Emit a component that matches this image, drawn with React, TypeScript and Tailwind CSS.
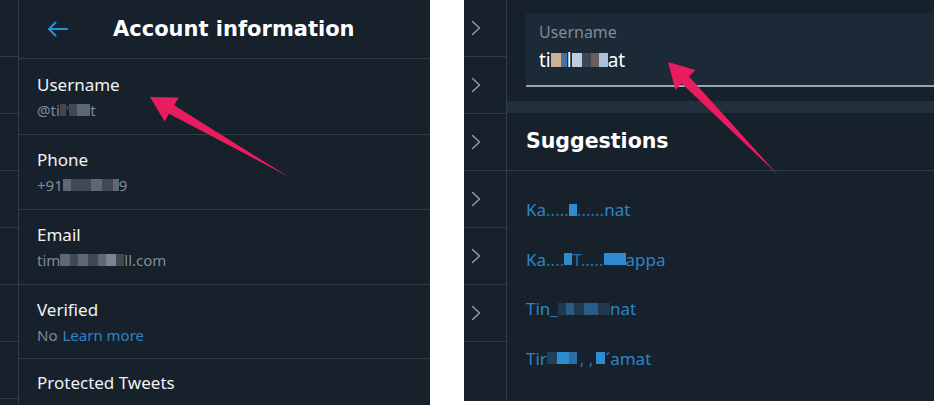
import React from "react";

const F = { fontFamily: '"Noto Sans", "Open Sans", sans-serif' };
const H = { fontFamily: '"DejaVu Sans", "Noto Sans", sans-serif' };

function Blk({ w, c, h = 12 }: { w: number; c: string; h?: number }) {
  return <span className="inline-block align-middle" style={{ width: w, height: h, background: c }} />;
}

function Chevron() {
  return (
    <svg width="10" height="16" viewBox="0 0 10 16" fill="none">
      <path d="M1.5 1.5 L8.5 8 L1.5 14.5" stroke="#8b98a5" strokeWidth="1.6" strokeLinecap="round" strokeLinejoin="round" />
    </svg>
  );
}

function Row({ label, children, h }: { label: string; children?: React.ReactNode; h: string }) {
  return (
    <div className={`${h} shrink-0 border-b border-[#2f3b47] pl-[18px] flex flex-col justify-center`}>
      <div className="text-[17px] leading-[22px] text-[#f0f2f4]">{label}</div>
      {children && <div className="text-[15px] leading-[20px] text-[#7f8c98] mt-[4px] flex items-center">{children}</div>}
    </div>
  );
}

export default function App() {
  const g1 = "#5d6874";
  const g2 = "#3e4954";
  const g3 = "#7b8592";
  return (
    <div className="w-[940px] h-[405px] bg-white flex relative overflow-hidden" style={F}>
      {/* Left screenshot */}
      <div className="w-[430px] h-[405px] shrink-0 flex bg-[#17212c] overflow-hidden">
        <div className="w-[19px] shrink-0 border-r border-[#2f3b47] flex flex-col">
          {[0, 1, 2, 3, 4, 5, 6].map((i) => (
            <div key={i} className="h-[57px] shrink-0 border-b border-[#2f3b47]" />
          ))}
        </div>
        <div className="flex-1 flex flex-col">
          <div className="h-[59px] shrink-0 border-b border-[#2f3b47] flex items-center">
            <svg className="ml-[28px]" width="21" height="16" viewBox="0 0 21 16" fill="none">
              <path d="M20 8 H2 M8.5 1.5 L2 8 L8.5 14.5" stroke="#2a93d8" strokeWidth="2" strokeLinecap="round" strokeLinejoin="round" />
            </svg>
            <div className="ml-[45px] text-[21px] leading-[28px] font-bold text-white" style={H}>
              Account information
            </div>
          </div>
          <Row label="Username" h="h-[76px]">
            <span>@ti</span>
            <Blk w={6} c={g2} />
            <span className="text-[#56616c]">'</span>
            <Blk w={8} c={g2} />
            <Blk w={13} c={g1} />
            <span>t</span>
          </Row>
          <Row label="Phone" h="h-[75px]">
            <span>+91</span>
            <Blk w={8} c={g1} />
            <Blk w={12} c={g2} />
            <Blk w={8} c={g2} />
            <Blk w={11} c={g1} />
            <Blk w={11} c={g2} />
            <Blk w={6} c={g1} />
            <span>9</span>
          </Row>
          <Row label="Email" h="h-[75px]">
            <span>tim</span>
            <Blk w={10} c={g1} />
            <Blk w={8} c={g2} />
            <Blk w={10} c={g1} />
            <Blk w={10} c={g2} />
            <Blk w={8} c={g1} />
            <Blk w={10} c={g3} />
            <Blk w={8} c={g2} />
            <span>ll.com</span>
          </Row>
          <Row label="Verified" h="h-[74px]">
            <span>No</span>
            <span className="ml-[5px] text-[#2b86c9]">Learn more</span>
          </Row>
          <div className="shrink-0 pl-[18px] pt-[13px] text-[17px] leading-[22px] text-[#f0f2f4]">Protected Tweets</div>
        </div>
      </div>

      <div className="w-[34px] shrink-0" />

      {/* Right screenshot */}
      <div className="w-[470px] h-[401px] shrink-0 flex bg-[#17212c] overflow-hidden">
        <div className="w-[43px] shrink-0 border-r border-[#2f3b47] flex flex-col">
          {[0, 1, 2, 3, 4, 5].map((i) => (
            <div key={i} className="h-[57px] shrink-0 border-b border-[#2f3b47] flex items-center pl-[7px]">
              <Chevron />
            </div>
          ))}
        </div>
        <div className="flex-1 flex flex-col overflow-hidden">
          <div className="shrink-0 pt-[13px] pl-[19px]">
            <div className="h-[74px] bg-[#1c2936] border-b-2 border-[#9aa5b0] pl-[13px] pt-[8px]">
              <div className="text-[16px] leading-[22px] text-[#7f8c98]">Username</div>
              <div className="mt-[5px] text-[19px] leading-[24px] text-white flex items-center">
                <span>ti</span>
                <Blk w={10} c="#c9b497" h={14} />
                <Blk w={6} c="#4a6fa0" h={14} />
                <span>l</span>
                <Blk w={10} c="#b8cde3" h={14} />
                <Blk w={9} c="#3b4652" h={14} />
                <Blk w={8} c="#6b5e5a" h={14} />
                <Blk w={9} c="#a9c2de" h={14} />
                <span>at</span>
              </div>
            </div>
          </div>
          <div className="shrink-0 h-[12px] mt-[14px] bg-[#222f3c]" />
          <div className="shrink-0 h-[58px] border-b border-[#2f3b47] pl-[19px] flex items-center">
            <div className="text-[20.5px] font-bold text-white" style={H}>Suggestions</div>
          </div>
          <div className="shrink-0 pl-[19px] pt-[14px] text-[17px] text-[#2b86c9]">
            <div className="h-[49.5px] flex items-center">
              <span>Ka</span><span className="text-[#2a6fa3]">.....</span><Blk w={8} c="#2d8cd0" /><span className="text-[#2a6fa3]">......</span><span>nat</span>
            </div>
            <div className="h-[49.5px] flex items-center">
              <span>Ka</span><span className="text-[#2a6fa3]">....</span><Blk w={8} c="#2d8cd0" /><span className="text-[#2a6fa3]">T.....</span><Blk w={22} c="#2d8cd0" /><span>appa</span>
            </div>
            <div className="h-[49.5px] flex items-center">
              <span>Tin</span><span className="text-[#2a6fa3]">_</span><Blk w={8} c="#22384d" /><Blk w={8} c="#2a5d86" /><Blk w={10} c="#22384d" /><Blk w={14} c="#2a5d86" /><Blk w={12} c="#22384d" /><span>nat</span>
            </div>
            <div className="h-[49.5px] flex items-center">
              <span>Tir</span><Blk w={10} c="#21405c" /><Blk w={12} c="#2d8cd0" /><Blk w={8} c="#2a6fa3" /><span className="text-[#2a6fa3] mx-[3px]">, ,</span><Blk w={9} c="#2d8cd0" /><span>´amat</span>
            </div>
            <div className="h-[49.5px] flex items-center text-[#5a6570]">
              <span>I.... . ... ........</span>
            </div>
          </div>
        </div>
      </div>

      {/* Annotation arrows */}
      <svg className="absolute left-0 top-0 pointer-events-none" width="940" height="405" viewBox="0 0 940 405">
        <polygon points="150,97 178.6,97.4 174.1,105.2 289,177 169.1,113.8 164.6,121.6" fill="#e81c5e" />
        <polygon points="668,62 695.4,70.1 689,76.4 778,175 681.8,83.4 675.4,89.7" fill="#e81c5e" />
      </svg>
    </div>
  );
}
